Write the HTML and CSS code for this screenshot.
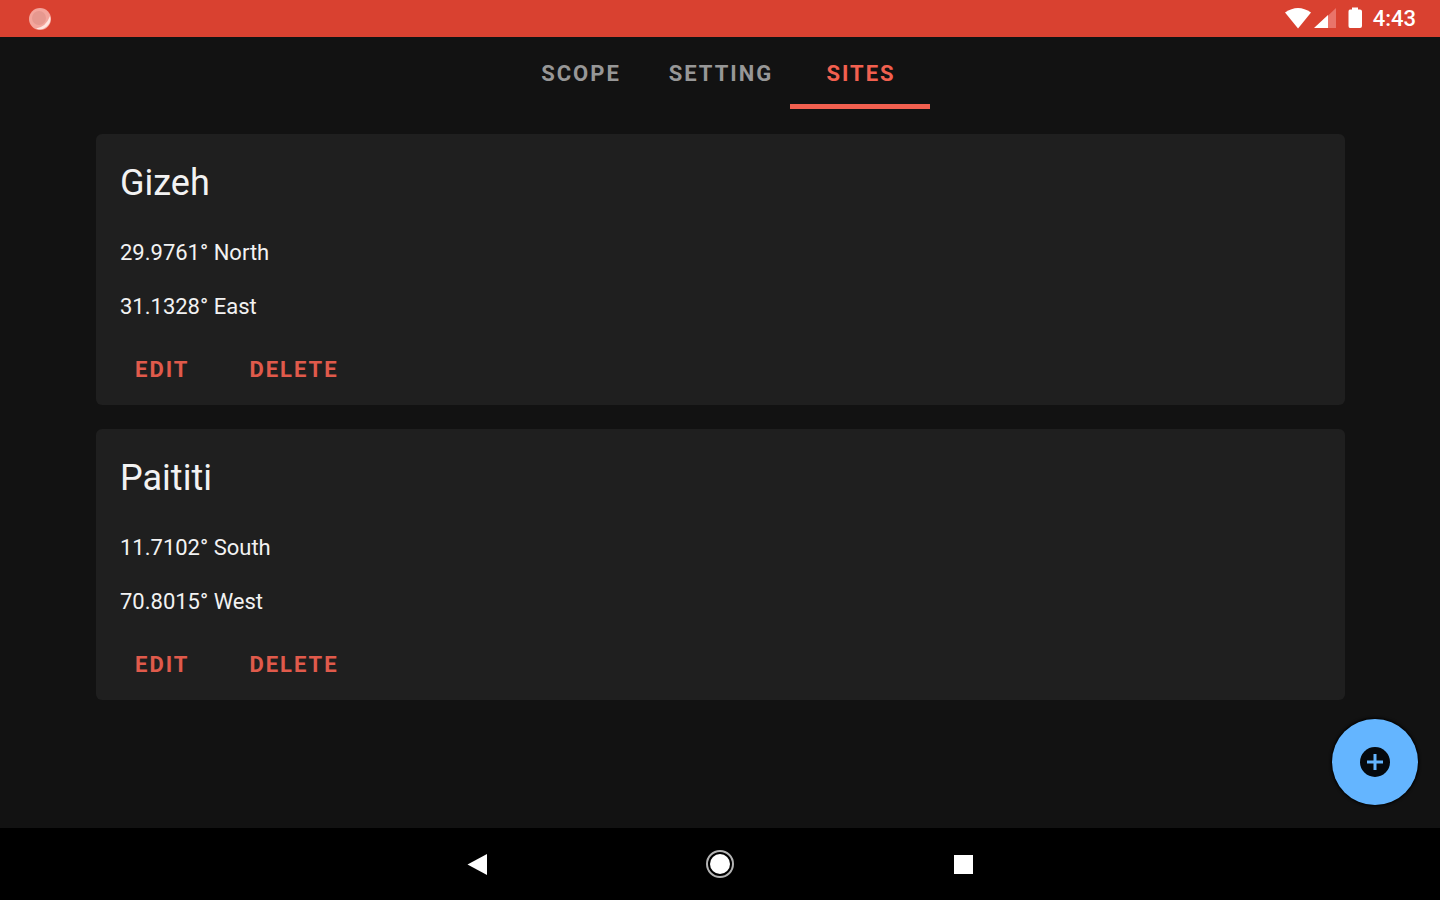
FILE: index.html
```html
<!DOCTYPE html>
<html lang="en">
<head>
<meta charset="utf-8">
<meta name="viewport" content="width=device-width, initial-scale=1">
<title>Sites</title>
<link rel="stylesheet" href="styles.css">
</head>
<body>
<div class="screen">
  <header class="status">
    <svg class="status-dot" viewBox="0 0 24 24" width="24" height="24" aria-hidden="true">
      <circle cx="12" cy="12" r="11" fill="#f3a59c"/>
      <path d="M22 9A10.500 10.500 0 0 1 8 21.500Q18 20 22 9Z" fill="#ffe4df"/>
      <circle cx="11" cy="11" r="7" fill="#e6988f"/>
    </svg>
    <div class="status-right">
      <svg viewBox="0 0 82 24" width="82" height="24" aria-hidden="true">
        <path d="M0 5.500Q13 -3.500 26 5.500L13 21.500Z" fill="#fff"/>
        <path d="M51 1V21H30Z" fill="#e9746a"/>
        <path d="M43 8V21H29Z" fill="#fff"/>
        <path d="M67 0.500H73V2.500H75Q77 2.500 77 4.500V19Q77 21 75 21H65Q63.500 21 63.500 19V4.500Q63.500 2.500 65 2.500H67Z" fill="#fff"/>
      </svg>
      <time class="clock">4:43</time>
    </div>
  </header>

  <nav class="tabs">
    <button class="tab" type="button">SCOPE</button>
    <button class="tab" type="button">SETTING</button>
    <button class="tab tab-active" type="button" aria-current="page">SITES</button>
  </nav>

  <main class="sites">
    <article class="card">
      <h2 class="card-title">Gizeh</h2>
      <p class="coord">29.9761° North</p>
      <p class="coord">31.1328° East</p>
      <div class="actions">
        <button class="action" type="button">EDIT</button>
        <button class="action" type="button">DELETE</button>
      </div>
    </article>
    <article class="card">
      <h2 class="card-title">Paititi</h2>
      <p class="coord">11.7102° South</p>
      <p class="coord">70.8015° West</p>
      <div class="actions">
        <button class="action" type="button">EDIT</button>
        <button class="action" type="button">DELETE</button>
      </div>
    </article>
  </main>

  <button class="fab" type="button" aria-label="Add site">
    <svg viewBox="0 0 30 30" width="30" height="30" aria-hidden="true">
      <circle cx="15" cy="15" r="15" fill="#05090d"/>
      <path d="M15 7V23M7 15H23" stroke="#64b5ff" stroke-width="3"/>
    </svg>
  </button>

  <footer class="navbar">
    <button class="nav-key" type="button" aria-label="Back">
      <svg viewBox="0 0 30 30" width="30" height="30" aria-hidden="true"><path d="M5.500 15.500L25 5V26Z" fill="#fff"/></svg>
    </button>
    <button class="nav-key" type="button" aria-label="Home">
      <svg viewBox="0 0 30 30" width="30" height="30" aria-hidden="true"><circle cx="15" cy="15" r="13" fill="none" stroke="#b4b4b4" stroke-width="2"/><circle cx="15" cy="15" r="10" fill="#fff"/></svg>
    </button>
    <button class="nav-key" type="button" aria-label="Recent apps">
      <svg viewBox="0 0 30 30" width="30" height="30" aria-hidden="true"><rect x="6" y="6" width="19" height="19" fill="#fff"/></svg>
    </button>
  </footer>
</div>
</body>
</html>
```
FILE: styles.css
```css
* { box-sizing: border-box; }

body {
  margin: 0;
  background: #121212;
  color: #f2f2f2;
  font-family: Roboto, "Liberation Sans", sans-serif;
}

button {
  border: 0;
  background: none;
  color: inherit;
  font: inherit;
  cursor: pointer;
}

.screen {
  position: relative;
  display: flex;
  flex-direction: column;
  min-height: 100vh;
}

.status {
  display: flex;
  align-items: center;
  justify-content: space-between;
  height: 37px;
  padding: 0 24px 0 28px;
  background: #d94130;
}

.status-right {
  display: flex;
  align-items: center;
  gap: 6px;
}

.clock {
  color: #fff;
  font-size: 22px;
  font-weight: 500;
  line-height: 36px;
}

.tabs {
  display: flex;
  justify-content: center;
  height: 72px;
}

.tab {
  width: 140px;
  padding: 6px 0 0 2px;
  border-bottom: 5px solid transparent;
  color: #979797;
  font-size: 22px;
  font-weight: 700;
  letter-spacing: 2px;
}

.tab-active {
  border-bottom-color: #f2604f;
  color: #f2604f;
}

.sites {
  display: flex;
  flex: 1;
  flex-direction: column;
  gap: 24px;
  padding: 25px 95px 25px 96px;
}

.card {
  padding: 24px 24px 6px;
  border-radius: 6px;
  background: #1f1f1f;
}

.card-title {
  margin: 0 0 18px;
  font-size: 36px;
  font-weight: 400;
  line-height: 50px;
}

.coord {
  margin: 0;
  font-size: 22px;
  line-height: 54px;
}

.actions {
  display: flex;
  gap: 30px;
  margin-top: 5px;
}

.action {
  height: 60px;
  padding: 0 15px;
  color: #e05a4b;
  font-size: 22px;
  font-weight: 700;
  letter-spacing: 2px;
}

.fab {
  position: absolute;
  right: 22px;
  bottom: 95px;
  display: flex;
  align-items: center;
  justify-content: center;
  width: 86px;
  height: 86px;
  padding: 0;
  border-radius: 50%;
  background: #64b5ff;
  box-shadow: 0 0 3px 1px #000;
}

.navbar {
  display: flex;
  align-items: center;
  justify-content: center;
  gap: 213px;
  height: 72px;
  background: #000;
}

.nav-key {
  display: flex;
  padding: 0;
}
```
